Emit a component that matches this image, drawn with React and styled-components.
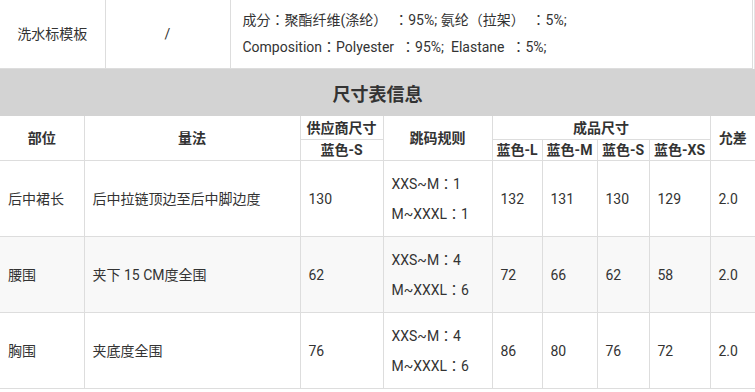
import React from "react";
import styled, { createGlobalStyle } from "styled-components";

const Global = createGlobalStyle`
  html, body { margin: 0; padding: 0; background: #fff; }
  body {
    font-family: Roboto, "Noto Sans CJK JP", sans-serif;
    font-size: 14px;
    color: #333;
  }
`;

const Page = styled.div`
  width: 755px;
  overflow: hidden;
`;

const InfoWrap = styled.div`
  width: 754px;
  border-right: 1px solid #e3e3e3;
`;

const Table = styled.table`
  width: ${(p) => p.$width}px;
  border-collapse: collapse;
  table-layout: fixed;
`;

const InfoCell = styled.td`
  height: 68px;
  padding: ${(p) => (p.$left ? "7px 12px 7px 12px" : "0")};
  border-right: 1px solid #ddd;
  border-bottom: 1px solid #ddd;
  text-align: ${(p) => (p.$left ? "left" : "center")};
  line-height: 27px;
  vertical-align: middle;
  white-space: pre;
  box-sizing: border-box;
`;

const TitleBar = styled.div`
  height: 47px;
  background: #d3d3d3;
  display: flex;
  align-items: center;
  justify-content: center;
  font-size: 18px;
  font-weight: bold;
  color: #333;
`;

const Th = styled.th`
  border: 1px solid #ddd;
  border-top: none;
  padding: 0;
  font-weight: bold;
  font-size: 14px;
  line-height: 20px;
  height: ${(p) => p.$h || 20}px;
  text-align: center;
  vertical-align: middle;
  white-space: nowrap;
  &:first-child { border-left: none; }
  &:last-child { border-right: none; }
`;

const Tr = styled.tr`
  background: ${(p) => (p.$alt ? "#f8f8f8" : "#fff")};
`;

const Td = styled.td`
  border: 1px solid #ddd;
  padding: 0 8px;
  height: 76px;
  line-height: 30px;
  text-align: left;
  vertical-align: middle;
  white-space: nowrap;
  box-sizing: border-box;
  &:first-child { border-left: none; }
  &:last-child { border-right: none; }
`;

const widths = [84, 216, 83, 109, 50, 55, 52, 61, 45];

const rows = [
  { part: "后中裙长", method: "后中拉链顶边至后中脚边度", sup: "130", rule: ["XXS~M：1", "M~XXXL：1"], sizes: ["132", "131", "130", "129"], tol: "2.0" },
  { part: "腰围", method: "夹下 15 CM度全围", sup: "62", rule: ["XXS~M：4", "M~XXXL：6"], sizes: ["72", "66", "62", "58"], tol: "2.0" },
  { part: "胸围", method: "夹底度全围", sup: "76", rule: ["XXS~M：4", "M~XXXL：6"], sizes: ["86", "80", "76", "72"], tol: "2.0" },
];

export default function App() {
  return (
    <Page>
      <Global />
      <InfoWrap>
        <Table $width={753}>
          <colgroup>
            <col style={{ width: 105 }} />
            <col style={{ width: 125 }} />
            <col />
          </colgroup>
          <tbody>
            <tr>
              <InfoCell>洗水标模板</InfoCell>
              <InfoCell>/</InfoCell>
              <InfoCell $left>
                {"成分：聚酯纤维(涤纶）  ：95%; 氨纶（拉架）  ：5%;"}
                <br />
                {"Composition：Polyester  ：95%;  Elastane  ：5%;"}
              </InfoCell>
            </tr>
          </tbody>
        </Table>
      </InfoWrap>
      <TitleBar>尺寸表信息</TitleBar>
      <Table $width={755}>
        <colgroup>
          {widths.map((w, i) => (
            <col key={i} style={{ width: w }} />
          ))}
        </colgroup>
        <thead>
          <tr>
            <Th rowSpan={2}>部位</Th>
            <Th rowSpan={2}>量法</Th>
            <Th $h={23}>供应商尺寸</Th>
            <Th rowSpan={2}>跳码规则</Th>
            <Th colSpan={4} $h={23}>成品尺寸</Th>
            <Th rowSpan={2}>允差</Th>
          </tr>
          <tr>
            <Th>蓝色-S</Th>
            <Th>蓝色-L</Th>
            <Th>蓝色-M</Th>
            <Th>蓝色-S</Th>
            <Th>蓝色-XS</Th>
          </tr>
        </thead>
        <tbody>
          {rows.map((r, i) => (
            <Tr key={i} $alt={i === 1}>
              <Td>{r.part}</Td>
              <Td>{r.method}</Td>
              <Td>{r.sup}</Td>
              <Td>
                {r.rule[0]}
                <br />
                {r.rule[1]}
              </Td>
              {r.sizes.map((s, j) => (
                <Td key={j}>{s}</Td>
              ))}
              <Td>{r.tol}</Td>
            </Tr>
          ))}
        </tbody>
      </Table>
    </Page>
  );
}
